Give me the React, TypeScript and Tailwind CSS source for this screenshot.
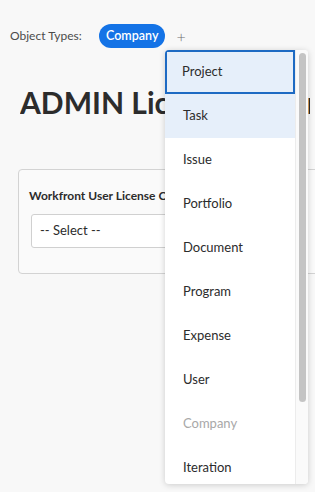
import React from "react";

const items = [
  "Project",
  "Task",
  "Issue",
  "Portfolio",
  "Document",
  "Program",
  "Expense",
  "User",
  "Company",
  "Iteration",
];

export default function App() {
  return (
    <div
      className="relative w-[315px] h-[492px] overflow-hidden bg-[#f8f8f8] text-[#2c2c2c]"
      style={{ fontFamily: "Lato, 'Open Sans', Arial, sans-serif" }}
    >
      <div className="flex items-center pl-[10px] pt-[24px] h-[48px]">
        <span className="text-[12px] text-[#4b4b4b] w-[89px]">Object Types:</span>
        <span className="h-[24px] px-[7px] rounded-full bg-[#1473e6] text-white text-[12.5px] font-semibold flex items-center">
          Company
        </span>
        <span className="ml-[11px] text-[#6e6e6e] text-[16px] leading-none font-light mt-[2px]">+</span>
      </div>

      <h1 className="ml-[20px] mt-[36px] w-[290px] overflow-hidden text-[30px] font-bold leading-[36px] whitespace-nowrap text-[#2c2c2c]">
        ADMIN License Report
      </h1>

      <div className="ml-[18px] mt-[49px] w-[340px] h-[105px] border border-[#d3d3d3] rounded-[4px] bg-[#fafafa] pl-[10px] pt-[18px]">
        <div className="text-[12px] font-bold text-[#2c2c2c] whitespace-nowrap leading-[16px]">
          Workfront User License Counts
        </div>
        <div className="mt-[10px] ml-[2px] w-[260px] h-[34px] border border-[#d0d0d0] rounded-[3px] bg-white flex items-center pl-[8px] text-[13px] text-[#2c2c2c]">
          -- Select --
        </div>
      </div>

      <div className="absolute left-[165px] top-[50px] w-[143px] h-[434px] bg-white rounded-[4px] shadow-[0_1px_6px_rgba(0,0,0,0.18)] overflow-hidden flex">
        <div className="w-[130px] flex flex-col">
          {items.map((it, i) => (
            <div
              key={it}
              className={
                "h-[44px] shrink-0 flex items-center text-[13px] " +
                (i === 0
                  ? "bg-[#e6effa] border-2 border-[#1d6ac3] pl-[15px] text-[#2c2c2c]"
                  : i === 1
                  ? "bg-[#e6effa] text-[#2c2c2c] pl-[18px]"
                  : i === 8
                  ? "text-[#a8a8a8] pl-[18px]"
                  : "text-[#2c2c2c] pl-[18px]")
              }
            >
              {it}
            </div>
          ))}
        </div>
        <div className="flex-1 border-l border-[#ececec] bg-[#fafafa] pt-[3px] flex justify-center">
          <div className="w-[7px] h-[349px] rounded-full bg-[#c4c4c4]" />
        </div>
      </div>
    </div>
  );
}
